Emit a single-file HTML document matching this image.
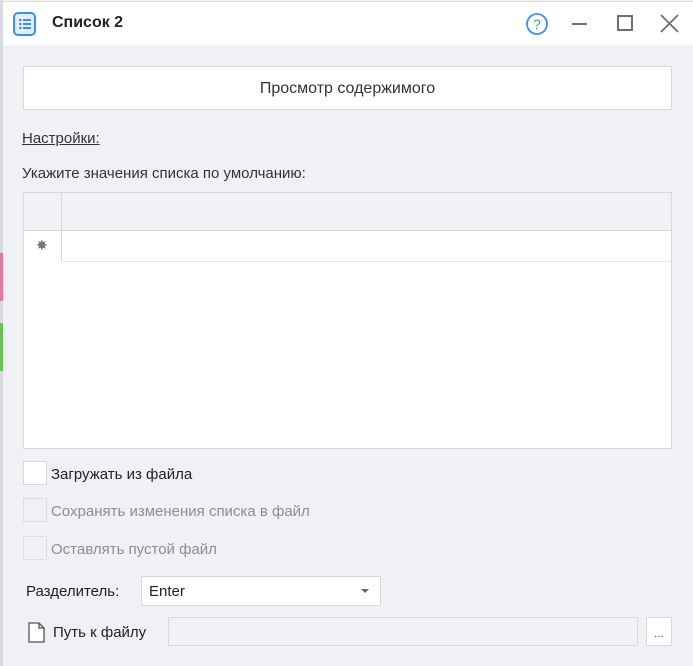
<!DOCTYPE html>
<html><head><meta charset="utf-8"><style>
*{box-sizing:border-box;margin:0;padding:0}
body{width:693px;height:666px;overflow:hidden;background:#f0f1f5;font-family:"Liberation Sans",sans-serif;color:#222;position:relative;font-size:15px}
.a{position:absolute}
.strip{left:0;width:3px;top:0;height:666px;background:#d9dadf}
.title{left:3px;top:1px;width:690px;height:44px;background:#fff;border-top:1px solid #ddd}
.btn{left:23px;top:66px;width:649px;height:44px;background:#fff;border:1px solid #d6d8de;text-align:center;line-height:44px;font-size:16px;color:#333}
.grid{left:23px;top:192px;width:649px;height:257px;background:#fff;border:1px solid #d6d8de}
.cb{width:24px;height:24px;background:#fff;border:1px solid #d6d8de}
.cbd{width:24px;height:24px;background:#f0f1f5;border:1px solid #dcdde2}
.lbl{font-size:15px}
.dis{color:#8a8d93}
</style></head><body>
<div class="a strip"></div>
<div class="a" style="left:0;top:253px;width:3px;height:48px;background:#e07a9a"></div>
<div class="a" style="left:0;top:323px;width:3px;height:48px;background:#6cc058"></div>
<div class="a title"></div>
<svg class="a" style="left:12px;top:11px" width="26" height="26" viewBox="0 0 26 26"><rect x="2" y="2" width="21" height="22" rx="4" fill="#e3eefd" stroke="#3d8fef" stroke-width="2"/><g fill="#3d8fef"><rect x="7" y="8" width="2.5" height="2"/><rect x="11" y="8" width="8" height="2"/><rect x="7" y="12" width="2.5" height="2"/><rect x="11" y="12" width="8" height="2"/><rect x="7" y="16" width="2.5" height="2"/><rect x="11" y="16" width="8" height="2"/></g></svg>
<div class="a" style="left:52px;top:14px;font-weight:bold;font-size:16px;color:#222">Список 2</div>
<svg class="a" style="left:525px;top:12px" width="24" height="24" viewBox="0 0 24 24"><circle cx="12" cy="12" r="10" fill="none" stroke="#3d8fef" stroke-width="1.8"/><text x="12" y="17" text-anchor="middle" font-family="Liberation Sans" font-size="14" fill="#3d8fef">?</text></svg>
<div class="a" style="left:572px;top:23px;width:15px;height:2px;background:#6b6e75"></div>
<div class="a" style="left:617px;top:15px;width:16px;height:16px;border:2px solid #6b6e75"></div>
<svg class="a" style="left:660px;top:14px" width="19" height="19" viewBox="0 0 19 19"><path d="M1 1L18 18M18 1L1 18" stroke="#6b6e75" stroke-width="1.8"/></svg>
<div class="a btn">Просмотр содержимого</div>
<div class="a" style="left:22px;top:130px;text-decoration:underline;color:#333">Настройки:</div>
<div class="a" style="left:22px;top:165px;color:#333">Укажите значения списка по умолчанию:</div>
<div class="a grid">
 <div class="a" style="left:0;top:0;width:647px;height:38px;background:#f0f1f5;border-bottom:1px solid #d6d8de"></div>
 <div class="a" style="left:37px;top:0;width:1px;height:69px;background:#d6d8de"></div>
 <div class="a" style="left:37px;top:68px;width:610px;height:1px;background:#e4e6ea"></div>
 <div class="a" style="left:12px;top:44px;color:#777;font-size:14px">✸</div>
</div>
<div class="a cb" style="left:23px;top:461px"></div>
<div class="a lbl" style="left:51px;top:466px">Загружать из файла</div>
<div class="a cbd" style="left:23px;top:498px"></div>
<div class="a lbl dis" style="left:51px;top:503px">Сохранять изменения списка в файл</div>
<div class="a cbd" style="left:23px;top:536px"></div>
<div class="a lbl dis" style="left:51px;top:541px">Оставлять пустой файл</div>
<div class="a lbl" style="left:26px;top:583px">Разделитель:</div>
<div class="a" style="left:141px;top:576px;width:240px;height:30px;background:#fff;border:1px solid #d6d8de;padding:6px 7px">Enter</div>
<div class="a" style="left:361px;top:589px;border-left:4px solid transparent;border-right:4px solid transparent;border-top:4px solid #666"></div>
<svg class="a" style="left:28px;top:622px" width="18" height="21" viewBox="0 0 18 21"><path d="M1 1H11L16 6V20H1Z M11 1V6H16" fill="#fff" stroke="#555" stroke-width="1.3"/></svg>
<div class="a lbl" style="left:53px;top:624px">Путь к файлу</div>
<div class="a" style="left:168px;top:617px;width:470px;height:29px;background:#f0f1f5;border:1px solid #d6d8de"></div>
<div class="a" style="left:646px;top:617px;width:26px;height:29px;background:#fff;border:1px solid #d6d8de;text-align:center;font-size:12px;line-height:30px;color:#555">...</div>
</body></html>
